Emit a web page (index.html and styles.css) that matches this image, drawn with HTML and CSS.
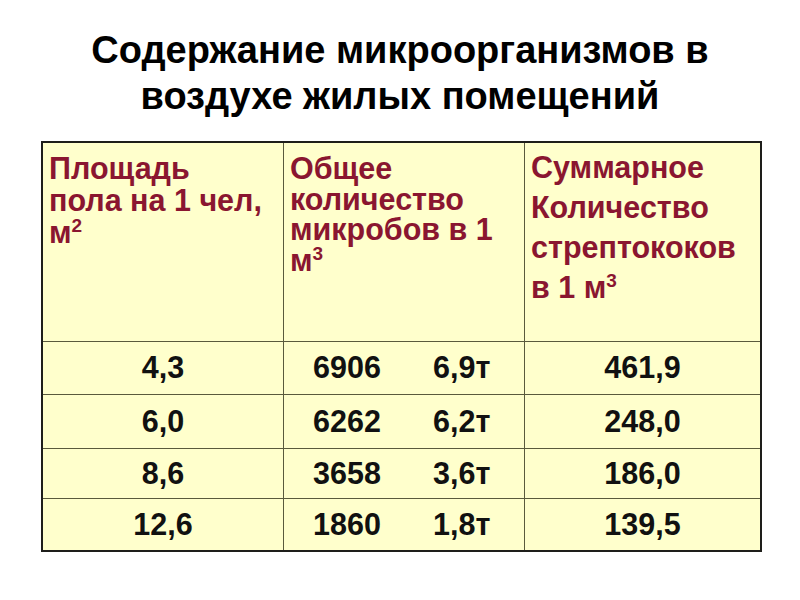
FILE: index.html
```html
<!DOCTYPE html>
<html lang="ru">
<head>
<meta charset="utf-8">
<link rel="stylesheet" href="styles.css">
</head>
<body>
<h1 class="title"><span class="title-line">Содержание микроорганизмов в</span><span class="title-line">воздухе жилых помещений</span></h1>
<table class="data">
  <tr class="head-row">
    <th class="c1"><div class="h h1">Площадь<br>пола на 1 чел,<br>м<sup>2</sup></div></th>
    <th class="c2"><div class="h h2">Общее<br>количество<br>микробов в 1<br>м<sup>3</sup></div></th>
    <th class="c3"><div class="h h3">Суммарное<br>Количество<br>стрептококов<br>в 1 м<sup>3</sup></div></th>
  </tr>
  <tr class="r1"><td>4,3</td><td class="pair"><span class="a">6906</span><span class="b">6,9т</span></td><td>461,9</td></tr>
  <tr class="r2"><td>6,0</td><td class="pair"><span class="a">6262</span><span class="b">6,2т</span></td><td>248,0</td></tr>
  <tr class="r3"><td>8,6</td><td class="pair"><span class="a">3658</span><span class="b">3,6т</span></td><td>186,0</td></tr>
  <tr class="r4"><td>12,6</td><td class="pair"><span class="a">1860</span><span class="b">1,8т</span></td><td>139,5</td></tr>
</table>
</body>
</html>
```
FILE: styles.css
```css
html, body {
  margin: 0;
  padding: 0;
  background: #ffffff;
}
body {
  width: 800px;
  height: 600px;
  font-family: "Liberation Sans", Arial, sans-serif;
}
.title {
  margin: 0;
  padding-top: 27px;
  height: 116px;
  box-sizing: border-box;
  font-size: 38px;
  font-weight: bold;
  line-height: 46px;
  color: #000;
  text-align: center;
}
.title-line {
  display: block;
}
.data {
  margin-left: 41px;
  width: 721px;
  border-collapse: collapse;
  background: #ffffcc;
  border: 2px solid #1e1e1a;
  margin-top: 25px;
}
.data th, .data td {
  border: 1.5px solid #5a5a3c;
  padding: 0;
}
.data .c1 { width: 240px; }
.data .c2 { width: 240px; }
.head-row { height: 199px; }
.data th {
  vertical-align: top;
  text-align: left;
  font-weight: bold;
  color: #8a1630;
  font-size: 30.5px;
}
.h {
  padding: 9px 0 0 6px;
}
.h1 { line-height: 32px; }
.h2 { line-height: 30.5px; padding-top: 10px; }
.h3 { line-height: 40px; padding-top: 4px; }
.h sup {
  font-size: 19px;
  line-height: 0;
  vertical-align: 11px;
}
.data td {
  text-align: center;
  font-weight: bold;
  font-size: 30.5px;
  color: #111;
}
.r1 { height: 53px; }
.r2 { height: 54px; }
.r3 { height: 50px; }
.r4 { height: 53px; }
.data td.pair {
  text-align: left;
  padding-left: 29px;
}
.pair .a {
  display: inline-block;
  width: 120px;
}
```
